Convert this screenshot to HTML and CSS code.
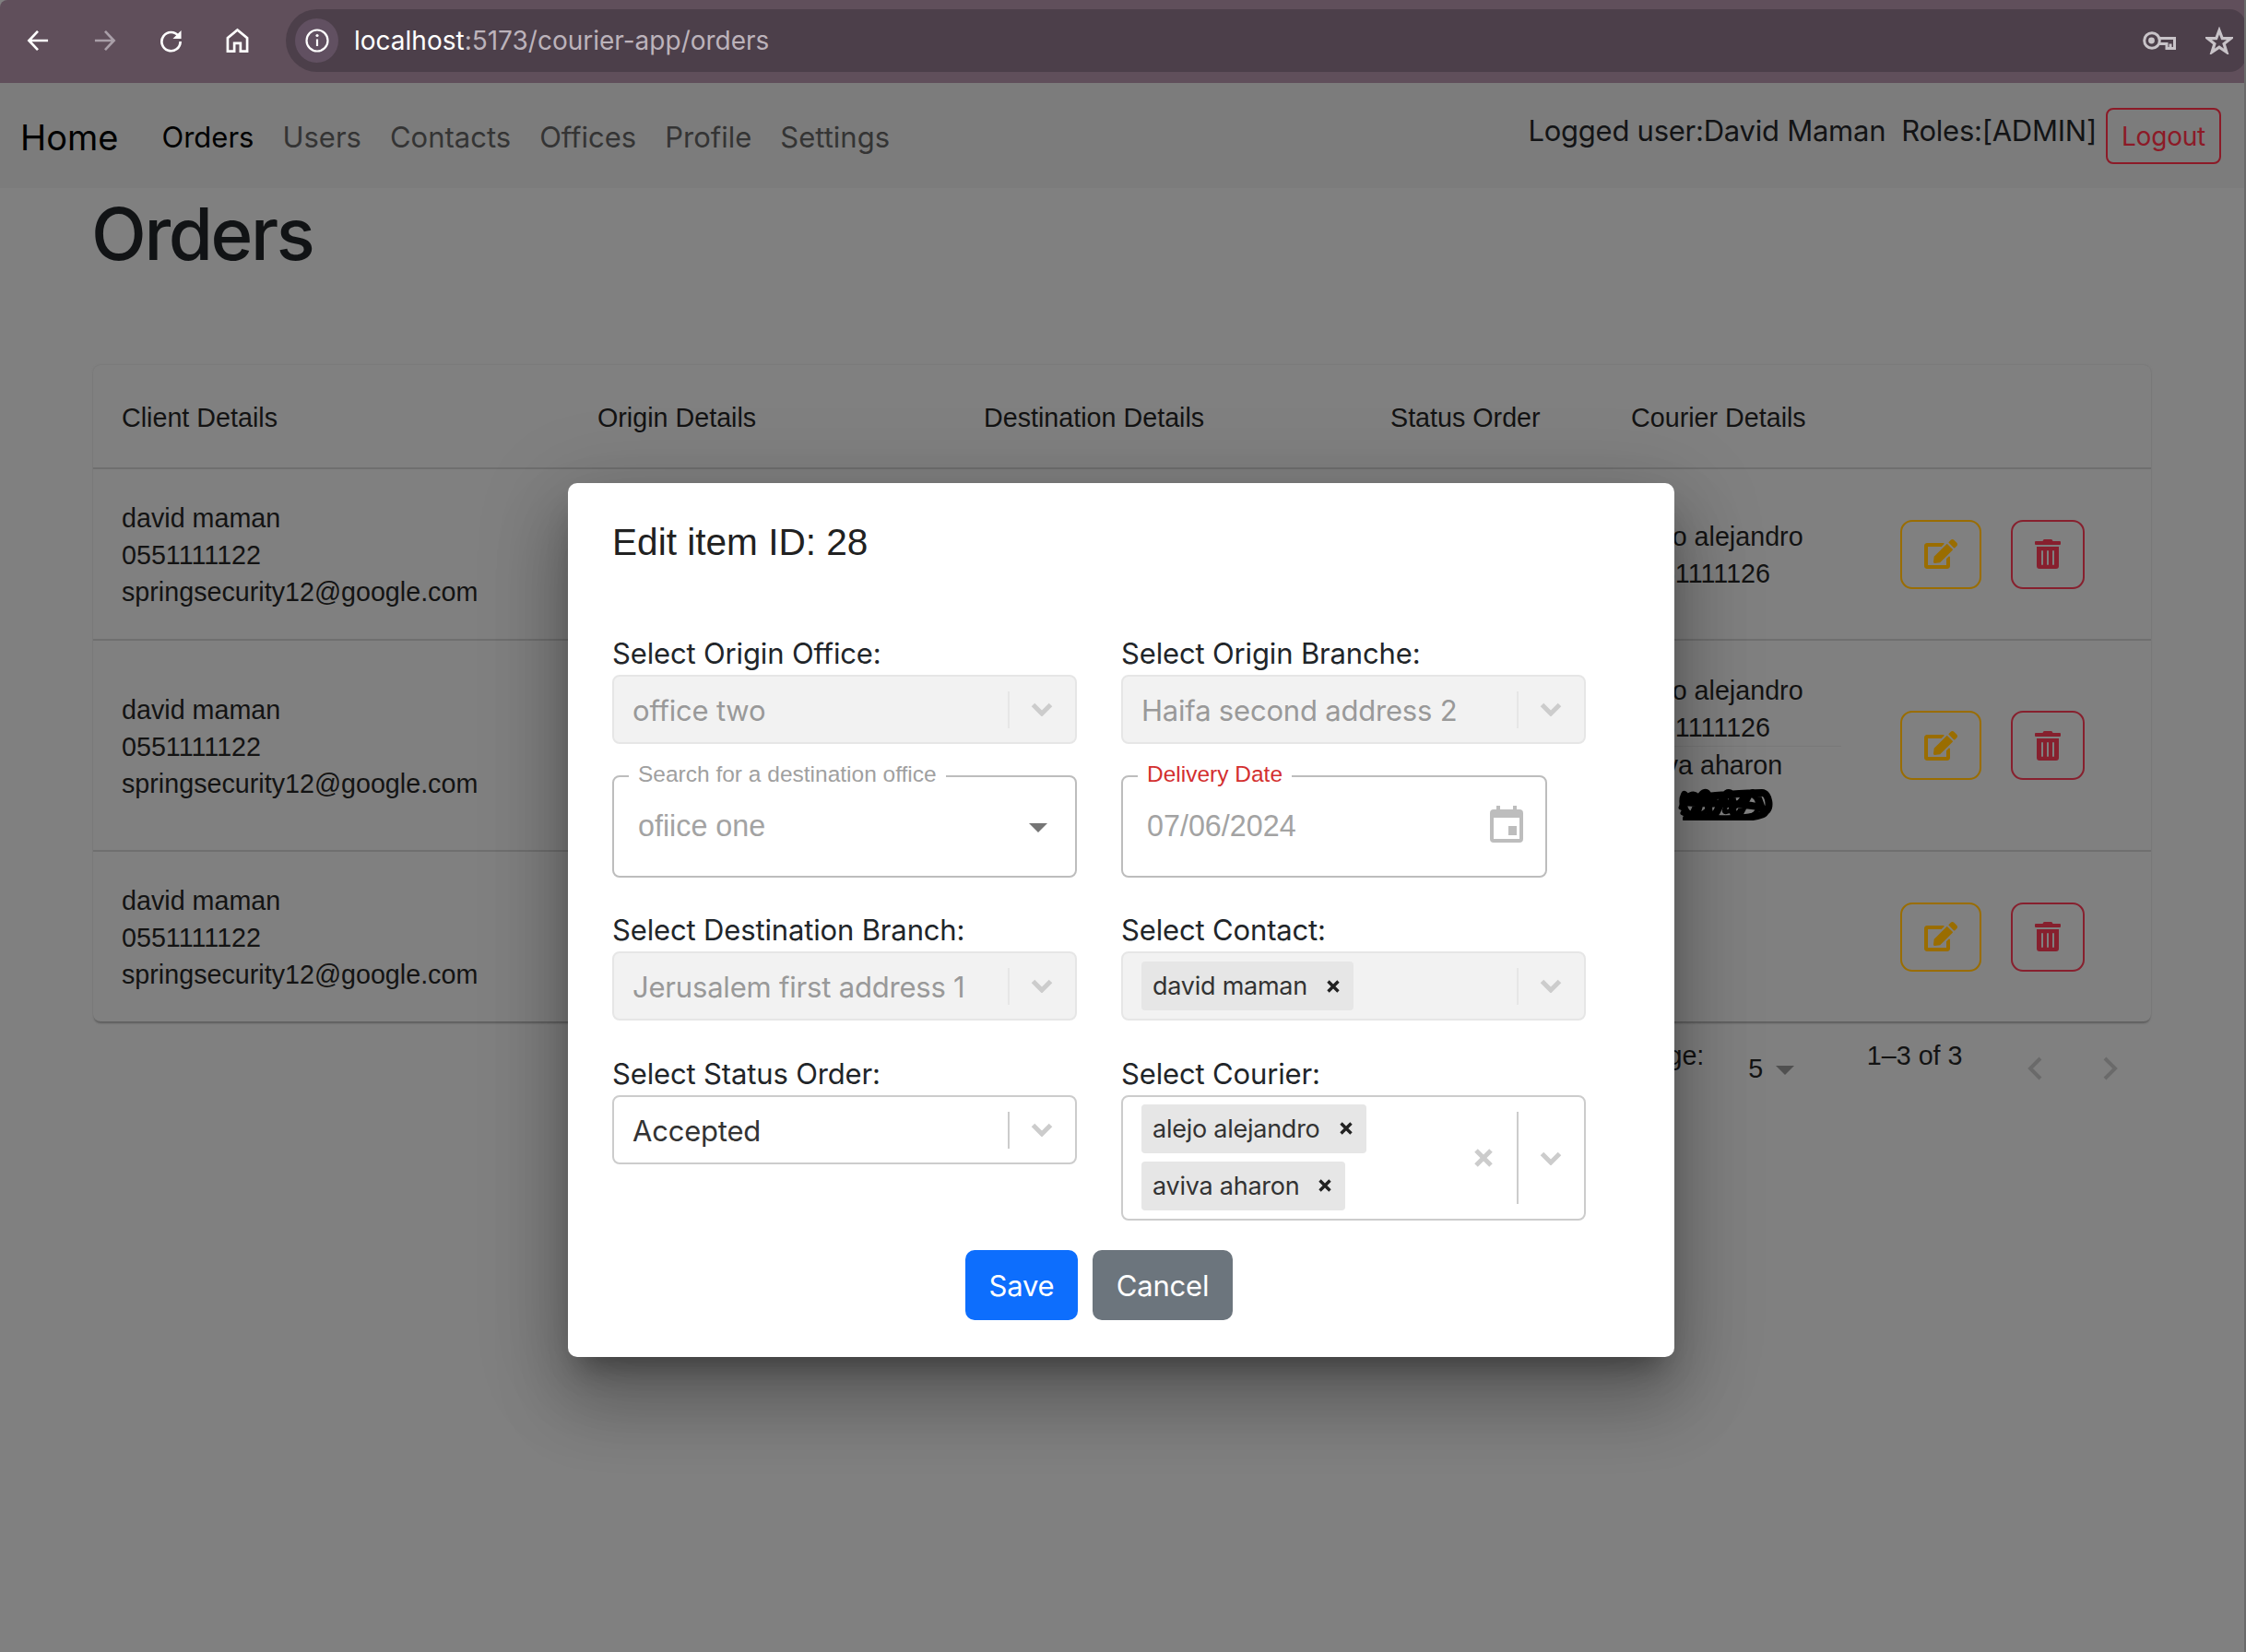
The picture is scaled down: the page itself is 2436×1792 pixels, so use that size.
FILE: index.html
```html
<!DOCTYPE html>
<html lang="en">
<head>
<meta charset="utf-8">
<title>Orders</title>
<link rel="stylesheet" href="styles.css">
</head>
<body>
<div class="window">
  <header class="chrome">
    <div class="chrome-nav">
      <svg class="ic ic-back" viewBox="0 0 26 26"><path d="M24 13H3M12.500 2.500 2.500 13l10 10.500"/></svg>
      <svg class="ic ic-fwd" viewBox="0 0 26 26"><path d="M2 13h21M13.500 2.500 23.500 13l-10 10.500"/></svg>
      <svg class="ic ic-reload" viewBox="0 0 26 26"><path d="M21.500 8A10.500 10.500 0 1 0 23.500 14"/><path class="solid" d="M24.500 1.500V11h-9.500z"/></svg>
      <svg class="ic ic-home" viewBox="0 0 26 28"><path d="M2 26V11L13 2l11 9v15h-7.500v-9h-7v9z"/></svg>
    </div>
    <div class="omnibox">
      <span class="site-info">
        <svg viewBox="0 0 26 26"><circle cx="13" cy="13" r="11.500"/><path d="M13 11.500V19"/><circle class="solid" cx="13" cy="7.500" r="1.600"/></svg>
      </span>
      <span class="url"><span class="url-host">localhost</span>:5173/courier-app/orders</span>
      <svg class="key" viewBox="0 0 36 20"><circle cx="10" cy="10" r="8.300"/><circle class="solid" cx="9.500" cy="10" r="3.400"/><path d="M17.500 7.500h17V18.500H26V13.500h-8.500M30 13.500v5"/></svg>
      <svg class="star" viewBox="0 0 30 30"><path d="M15 4l3.300 8.700H27.500l-7.400 5.800 2.800 9-7.900-5.300-7.900 5.300 2.800-9-7.400-5.800h9.200z"/></svg>
    </div>
  </header>

  <nav class="navbar">
    <a class="brand">Home</a>
    <ul class="nav-links">
      <li class="nav-link active">Orders</li>
      <li class="nav-link">Users</li>
      <li class="nav-link">Contacts</li>
      <li class="nav-link">Offices</li>
      <li class="nav-link">Profile</li>
      <li class="nav-link">Settings</li>
    </ul>
    <div class="user-box">
      <span class="user-text">Logged user:David Maman</span>
      <span class="user-text roles">Roles:[ADMIN]</span>
      <button class="btn-logout">Logout</button>
    </div>
  </nav>

  <main class="content">
    <h1 class="title">Orders</h1>
    <div class="card">
      <table class="orders">
        <colgroup>
          <col class="c-client"><col class="c-origin"><col class="c-dest"><col class="c-status"><col class="c-courier"><col class="c-actions">
        </colgroup>
        <thead>
          <tr class="row-head">
            <th>Client Details</th><th>Origin Details</th><th>Destination Details</th><th>Status Order</th><th>Courier Details</th><th></th>
          </tr>
        </thead>
        <tbody>
          <tr class="row-a">
            <td>david maman<br>0551111122<br>springsecurity12@google.com</td>
            <td></td>
            <td></td>
            <td></td>
            <td>alejo alejandro<br>0551111126</td>
            <td class="actions"><div class="action-group"><button class="btn-act edit"><svg viewBox="0 0 576 512"><path d="M402.600 83.200l90.200 90.200c3.800 3.800 3.800 10 0 13.800L274.400 405.600l-92.800 10.300c-12.400 1.400-22.900-9.100-21.500-21.500l10.300-92.800L388.800 83.200c3.800-3.800 10-3.800 13.800 0zm162-22.900l-48.800-48.800c-15.200-15.200-39.900-15.200-55.200 0l-35.400 35.400c-3.800 3.800-3.800 10 0 13.800l90.200 90.200c3.800 3.800 10 3.800 13.800 0l35.400-35.400c15.200-15.300 15.200-40 0-55.200zM384 346.200V448H64V128h229.800c3.200 0 6.200-1.300 8.500-3.500l40-40c7.600-7.600 2.200-20.500-8.500-20.500H48C21.500 64 0 85.500 0 112v352c0 26.500 21.500 48 48 48h352c26.500 0 48-21.500 48-48V306.200c0-10.700-12.900-16-20.500-8.500l-40 40c-2.200 2.300-3.500 5.300-3.500 8.500z"/></svg></button><button class="btn-act del"><svg viewBox="0 0 448 512"><path d="M32 464a48 48 0 0 0 48 48h288a48 48 0 0 0 48-48V128H32zm272-256a16 16 0 0 1 32 0v224a16 16 0 0 1-32 0zm-96 0a16 16 0 0 1 32 0v224a16 16 0 0 1-32 0zm-96 0a16 16 0 0 1 32 0v224a16 16 0 0 1-32 0zM432 32H312l-9.400-18.700A24 24 0 0 0 281.100 0H166.800a23.720 23.720 0 0 0-21.400 13.300L136 32H16A16 16 0 0 0 0 48v32a16 16 0 0 0 16 16h416a16 16 0 0 0 16-16V48a16 16 0 0 0-16-16z"/></svg></button></div></td>
          </tr>
          <tr class="row-b">
            <td>david maman<br>0551111122<br>springsecurity12@google.com</td>
            <td></td>
            <td></td>
            <td></td>
            <td>
              <div class="courier-first">alejo alejandro<br>0551111126</div>
              <div>aviva aharon</div>
              <svg class="scribble" viewBox="0 0 160 40"><path d="M54 12c-4 8 0 20 6 22s8-22 16-24 0 24 8 24 10-24 18-24 0 24 8 24 10-24 18-24 8 22 14 20 4-20-4-20-60 2-80 8 70 0 82 10-50 12-84 10"/><path class="scribble-thin" d="M50 26c6-14 14-20 20-10s-8 22 4 16 12-24 22-18-6 20 6 16 14-22 24-18 10 18 2 22-30 4-44 2-26 0-32-4"/></svg>
            </td>
            <td class="actions"><div class="action-group"><button class="btn-act edit"><svg viewBox="0 0 576 512"><path d="M402.600 83.200l90.200 90.200c3.800 3.800 3.800 10 0 13.800L274.400 405.600l-92.800 10.300c-12.400 1.400-22.900-9.100-21.500-21.500l10.300-92.800L388.800 83.200c3.800-3.800 10-3.800 13.800 0zm162-22.900l-48.800-48.800c-15.200-15.200-39.900-15.200-55.200 0l-35.400 35.400c-3.800 3.800-3.800 10 0 13.800l90.200 90.200c3.800 3.800 10 3.800 13.800 0l35.400-35.400c15.200-15.300 15.200-40 0-55.200zM384 346.200V448H64V128h229.800c3.200 0 6.200-1.300 8.500-3.500l40-40c7.600-7.600 2.200-20.500-8.500-20.500H48C21.500 64 0 85.500 0 112v352c0 26.500 21.500 48 48 48h352c26.500 0 48-21.500 48-48V306.200c0-10.700-12.900-16-20.500-8.500l-40 40c-2.200 2.300-3.500 5.300-3.500 8.500z"/></svg></button><button class="btn-act del"><svg viewBox="0 0 448 512"><path d="M32 464a48 48 0 0 0 48 48h288a48 48 0 0 0 48-48V128H32zm272-256a16 16 0 0 1 32 0v224a16 16 0 0 1-32 0zm-96 0a16 16 0 0 1 32 0v224a16 16 0 0 1-32 0zm-96 0a16 16 0 0 1 32 0v224a16 16 0 0 1-32 0zM432 32H312l-9.400-18.700A24 24 0 0 0 281.100 0H166.800a23.720 23.720 0 0 0-21.400 13.300L136 32H16A16 16 0 0 0 0 48v32a16 16 0 0 0 16 16h416a16 16 0 0 0 16-16V48a16 16 0 0 0-16-16z"/></svg></button></div></td>
          </tr>
          <tr class="row-c">
            <td>david maman<br>0551111122<br>springsecurity12@google.com</td>
            <td></td>
            <td></td>
            <td></td>
            <td></td>
            <td class="actions"><div class="action-group"><button class="btn-act edit"><svg viewBox="0 0 576 512"><path d="M402.600 83.200l90.200 90.200c3.800 3.800 3.800 10 0 13.800L274.400 405.600l-92.800 10.300c-12.400 1.400-22.900-9.100-21.500-21.500l10.300-92.800L388.800 83.200c3.800-3.800 10-3.800 13.800 0zm162-22.900l-48.800-48.800c-15.200-15.200-39.900-15.200-55.200 0l-35.400 35.400c-3.800 3.800-3.800 10 0 13.800l90.200 90.200c3.800 3.800 10 3.800 13.800 0l35.400-35.400c15.200-15.300 15.200-40 0-55.200zM384 346.200V448H64V128h229.800c3.200 0 6.200-1.300 8.500-3.500l40-40c7.600-7.600 2.200-20.500-8.500-20.500H48C21.500 64 0 85.500 0 112v352c0 26.500 21.500 48 48 48h352c26.500 0 48-21.500 48-48V306.200c0-10.700-12.900-16-20.500-8.500l-40 40c-2.200 2.300-3.500 5.300-3.500 8.500z"/></svg></button><button class="btn-act del"><svg viewBox="0 0 448 512"><path d="M32 464a48 48 0 0 0 48 48h288a48 48 0 0 0 48-48V128H32zm272-256a16 16 0 0 1 32 0v224a16 16 0 0 1-32 0zm-96 0a16 16 0 0 1 32 0v224a16 16 0 0 1-32 0zm-96 0a16 16 0 0 1 32 0v224a16 16 0 0 1-32 0zM432 32H312l-9.400-18.700A24 24 0 0 0 281.100 0H166.800a23.720 23.720 0 0 0-21.400 13.300L136 32H16A16 16 0 0 0 0 48v32a16 16 0 0 0 16 16h416a16 16 0 0 0 16-16V48a16 16 0 0 0-16-16z"/></svg></button></div></td>
          </tr>
        </tbody>
      </table>
    </div>
    <div class="pager">
      <span class="pager-label">Rows per page:</span>
      <span class="pager-size">5</span>
      <span class="pager-caret"></span>
      <span class="pager-range">1–3 of 3</span>
      <svg class="pager-prev" viewBox="0 0 16 26"><path d="M14 2 3 13l11 11"/></svg>
      <svg class="pager-next" viewBox="0 0 16 26"><path d="M2 2l11 11L2 24"/></svg>
    </div>
  </main>

  <section class="modal" role="dialog">
    <h2 class="modal-title">Edit item ID: 28</h2>
    <div class="form-grid">
      <div class="group">
        <label class="group-label">Select Origin Office:</label>
        <div class="select disabled">
          <div class="select-value">office two</div>
          <div class="select-tools"><span class="sep"></span><svg class="chev" viewBox="0 0 24 15"><path d="M2.500 2.500 12 12l9.500-9.500"/></svg></div>
        </div>
      </div>
      <div class="group">
        <label class="group-label">Select Origin Branche:</label>
        <div class="select disabled">
          <div class="select-value">Haifa second address 2</div>
          <div class="select-tools"><span class="sep"></span><svg class="chev" viewBox="0 0 24 15"><path d="M2.500 2.500 12 12l9.500-9.500"/></svg></div>
        </div>
      </div>
      <div class="outlined">
        <span class="float-label">Search for a destination office</span>
        <span class="outlined-value">ofiice one</span>
        <span class="caret"></span>
      </div>
      <div class="outlined date">
        <span class="float-label error">Delivery Date</span>
        <span class="outlined-value">07/06/2024</span>
        <svg class="calendar" viewBox="0 0 36 40"><path fill-rule="evenodd" d="M7 0h4v4h14V0h4v4h3a4 4 0 0 1 4 4v28a4 4 0 0 1-4 4H4a4 4 0 0 1-4-4V8a4 4 0 0 1 4-4h3zM4 13v23h28V13zm16 9h9v10h-9z"/></svg>
      </div>
      <div class="group">
        <label class="group-label">Select Destination Branch:</label>
        <div class="select disabled">
          <div class="select-value">Jerusalem first address 1</div>
          <div class="select-tools"><span class="sep"></span><svg class="chev" viewBox="0 0 24 15"><path d="M2.500 2.500 12 12l9.500-9.500"/></svg></div>
        </div>
      </div>
      <div class="group">
        <label class="group-label">Select Contact:</label>
        <div class="select disabled multi">
          <div class="chips"><span class="chip">david maman<svg class="chip-x" viewBox="0 0 14 14"><path d="M1.500 1.500l11 11M12.500 1.500l-11 11"/></svg></span></div>
          <div class="select-tools"><span class="sep"></span><svg class="chev" viewBox="0 0 24 15"><path d="M2.500 2.500 12 12l9.500-9.500"/></svg></div>
        </div>
      </div>
      <div class="group">
        <label class="group-label">Select Status Order:</label>
        <div class="select">
          <div class="select-value">Accepted</div>
          <div class="select-tools"><span class="sep"></span><svg class="chev" viewBox="0 0 24 15"><path d="M2.500 2.500 12 12l9.500-9.500"/></svg></div>
        </div>
      </div>
      <div class="group">
        <label class="group-label">Select Courier:</label>
        <div class="select multi tall">
          <div class="chips">
            <span class="chip">alejo alejandro<svg class="chip-x" viewBox="0 0 14 14"><path d="M1.500 1.500l11 11M12.500 1.500l-11 11"/></svg></span>
            <span class="chip">aviva aharon<svg class="chip-x" viewBox="0 0 14 14"><path d="M1.500 1.500l11 11M12.500 1.500l-11 11"/></svg></span>
          </div>
          <svg class="clear-x" viewBox="0 0 20 20"><path d="M2 2l16 16M18 2 2 18"/></svg>
          <div class="select-tools"><span class="sep"></span><svg class="chev" viewBox="0 0 24 15"><path d="M2.500 2.500 12 12l9.500-9.500"/></svg></div>
        </div>
      </div>
    </div>
    <div class="modal-actions">
      <button class="btn primary">Save</button>
      <button class="btn secondary">Cancel</button>
    </div>
  </section>
</div>
</body>
</html>
```

FILE: styles.css
```css
* { box-sizing: border-box; }
html, body { margin: 0; height: 100%; }
body { background: #2b2730; font-family: "Inter", "Liberation Sans", sans-serif; overflow: hidden; }
.window { position: relative; height: 1792px; width: 2436px; background: #808080; border-right: 2px solid #6a6a6a; overflow: hidden; }

/* browser chrome */
.chrome { height: 90px; background: #604f5b; display: flex; align-items: center; padding: 0 0 2px 29px; border-top-left-radius: 8px; margin-right: -2px; }
.chrome-nav { display: flex; align-items: center; width: 281px; gap: 47px; }
.ic { width: 25px; height: 26px; flex: none; fill: none; stroke: #fff; stroke-width: 2.8; }
.ic .solid { fill: #fff; stroke: none; }
.ic-fwd { stroke: #a99fa8; }
.ic-home { height: 28px; }
.omnibox { flex: 1; height: 68px; background: #4c3f4a; border-radius: 34px 18px 18px 34px; display: flex; align-items: center; padding-left: 10px; padding-right: 14px; }
.site-info { width: 47px; height: 48px; border-radius: 50%; background: #615061; display: flex; align-items: center; justify-content: center; flex: none; }
.site-info svg { width: 26px; height: 26px; fill: none; stroke: #fff; stroke-width: 2.2; }
.site-info .solid { fill: #fff; stroke: none; }
.url { font-size: 28px; color: #bcb3bb; margin-left: 17px; flex: 1; }
.url-host { color: #fff; }
.key { width: 36px; height: 20px; fill: none; stroke: #c8c3c8; stroke-width: 3; margin-right: 32px; }
.key .solid { fill: #c8c3c8; stroke: none; }
.star { width: 30px; height: 30px; fill: none; stroke: #c8c3c8; stroke-width: 3.2; }

/* navbar */
.navbar { height: 114px; background: #7c7c7c; display: flex; align-items: flex-start; padding: 0 25px 0 22px; }
.brand { font-size: 38px; color: #000; margin-top: 36px; line-height: 46px; }
.nav-links { list-style: none; display: flex; margin: 40px 0 0 47px; padding: 0; gap: 31px; }
.nav-link { font-size: 31px; line-height: 38px; color: #343434; }
.nav-link.active { color: #000; }
.user-box { margin-left: auto; display: flex; align-items: flex-start; }
.user-text { font-size: 31px; line-height: 38px; letter-spacing: -.25px; color: #131416; margin-top: 33px; }
.roles { margin-left: 17px; }
.btn-logout { margin: 27px 0 0 10px; width: 125px; height: 61px; border: 2px solid #8c1a27; border-radius: 8px; background: transparent; color: #8c1a27; font: 28px "Inter", sans-serif; letter-spacing: -.2px; padding: 0; }

/* content */
.content { padding: 0 101px; }
.title { margin: 3px 0 95px -2px; font-size: 78px; line-height: 94px; font-weight: 500; letter-spacing: -2.400px; color: #111315; }
.card { width: 2232px; border-radius: 8px; background: #808080; box-shadow: 0 3px 2px -1px #5e5e5e, 0 0 2px #707070; overflow: hidden; }
.orders { width: 2232px; table-layout: fixed; border-collapse: collapse; font-family: "Liberation Sans", Arial, sans-serif; font-size: 28.700px; line-height: 40px; color: #131313; }
.c-client { width: 516px; }
.c-origin { width: 419px; }
.c-dest { width: 441px; }
.c-status { width: 261px; }
.c-courier { width: 323px; }
.c-actions { width: 272px; }
.orders th { font-weight: 400; text-align: left; padding: 2px 0 0 31px; }
.orders td { padding: 2px 0 0 31px; vertical-align: middle; }
.orders tr { border-bottom: 2px solid #6f6f6f; }
.orders tbody tr:last-child { border-bottom: 0; }
.row-head { height: 112px; }
.row-a { height: 186px; }
.row-b { height: 229px; }
.row-c { height: 185px; }
.orders td.actions { padding: 0; }
.action-group { display: flex; gap: 32px; }
.btn-act { height: 75px; background: transparent; border: 2.500px solid; border-radius: 13px; padding: 0; display: flex; align-items: center; justify-content: center; }
.btn-act svg { height: 32px; }
.btn-act.edit { width: 88px; border-color: #9a6d00; }
.btn-act.edit svg { width: 36px; fill: #9a6d00; }
.btn-act.del { width: 80px; border-color: #87202e; }
.btn-act.del svg { width: 28px; fill: #87202e; }
.courier-first { border-bottom: 1px solid #787878; width: 228px; }
.scribble { display: block; width: 160px; height: 40px; margin-left: 4px; fill: none; stroke: #000; stroke-width: 8; stroke-linecap: round; stroke-linejoin: round; }
.scribble-thin { stroke-width: 5; }

/* pager */
.pager { display: flex; width: 2232px; font-family: "Liberation Sans", Arial, sans-serif; font-size: 28.700px; line-height: 40px; color: #131313; }
.pager-label { margin: 17px 0 0 auto; }
.pager-size { margin: 31px 0 0 48px; }
.pager-caret { margin: 48px 0 0 14px; width: 0; height: 0; border-left: 10px solid transparent; border-right: 10px solid transparent; border-top: 10px solid #505050; }
.pager-range { margin: 17px 0 0 78.500px; }
.pager-prev, .pager-next { width: 16px; height: 26px; margin-top: 38px; fill: none; stroke: #6a6a6a; stroke-width: 4; }
.pager-prev { margin-left: 70.500px; }
.pager-next { margin-left: 66px; margin-right: 36px; }

/* modal */
.modal { position: absolute; left: 616px; top: 524px; width: 1200px; height: 948px; background: #fff; border-radius: 10px; padding: 0 48px; box-shadow: 0 22px 30px -14px rgba(0,0,0,.35), 0 48px 76px 6px rgba(0,0,0,.2), 0 18px 92px 16px rgba(0,0,0,.14); }
.modal-title { margin: 0 0 74px; padding-top: 41px; font: 400 40.600px/46px "Liberation Sans", Arial, sans-serif; color: #212121; }
.form-grid { display: grid; grid-template-columns: 504px 504px; column-gap: 48px; row-gap: 34px; align-items: start; }
.group-label { display: block; font-size: 31px; line-height: 47px; letter-spacing: -.15px; color: #212529; }
.select { height: 75px; border: 2px solid #ccc; border-radius: 8px; background: #fff; display: flex; align-items: center; position: relative; }
.select.disabled { background: #f2f2f2; border-color: #e6e6e6; }
.select-value { flex: 1; padding: 2px 0 0 20px; font-size: 31px; letter-spacing: -.2px; color: #333; white-space: nowrap; }
.select.disabled .select-value { color: #999; }
.select-tools { display: flex; align-items: center; width: 73px; flex: none; height: 100%; }
.sep { width: 2px; height: 40px; background: #ccc; flex: none; }
.select.disabled .sep { background: #e6e6e6; }
.tall .sep { height: 100px; }
.chev { width: 24px; height: 15px; margin-left: 23px; fill: none; stroke: #ccc; stroke-width: 5; }
.tall { height: 136px; }
.tall .chips { margin-top: -2px; }
.chips { flex: 1; display: flex; flex-direction: column; align-items: flex-start; gap: 9px; padding-left: 20px; }
.chip { display: flex; align-items: center; height: 53px; background: #e6e6e6; border-radius: 4px; padding: 0 12px; font-size: 27px; letter-spacing: -.25px; color: #333; }
.chip-x { width: 14px; height: 14px; margin-left: 21px; margin-right: 3px; fill: none; stroke: #222; stroke-width: 3.400; }
.clear-x { position: absolute; left: 381px; top: 56px; width: 20px; height: 20px; fill: none; stroke: #ccc; stroke-width: 5; }

/* outlined MUI-like fields */
.outlined { position: relative; height: 111px; margin-bottom: -1px; border: 2px solid #bdbdbd; border-radius: 8px; display: flex; align-items: center; padding-left: 26px; font-family: "Liberation Sans", Arial, sans-serif; }
.outlined.date { width: 462px; }
.float-label { position: absolute; left: 16px; top: -17px; padding: 0 10px; background: #fff; font-size: 24.500px; line-height: 28px; color: #a0a0a0; }
.float-label.error { color: #d32f2f; }
.outlined-value { font-size: 32.300px; color: #a3a3a3; }
.caret { position: absolute; right: 30px; top: 50px; width: 0; height: 0; border-left: 10px solid transparent; border-right: 10px solid transparent; border-top: 10px solid #757575; }
.calendar { position: absolute; right: 24px; top: 31px; width: 36px; height: 40px; fill: #bdbdbd; }

.modal-actions { display: flex; justify-content: center; gap: 16px; margin: 32px 0 0; padding-right: 48px; }
.btn { height: 76px; border: 0; border-radius: 10px; color: #fff; font: 31px "Inter", sans-serif; letter-spacing: -.2px; padding: 0; }
.primary { width: 122px; background: #0d6efd; }
.secondary { width: 152px; background: #6c757d; }
```
